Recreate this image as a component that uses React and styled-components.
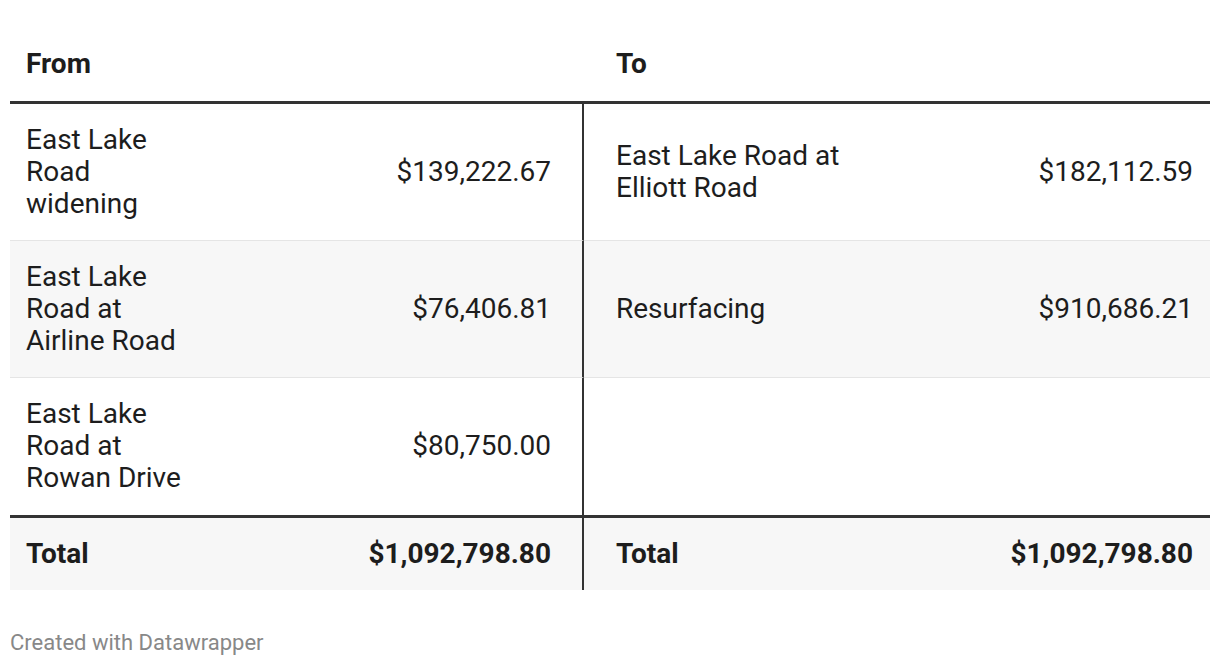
import React from "react";
import styled, { createGlobalStyle } from "styled-components";

const Global = createGlobalStyle`
  html, body { margin: 0; padding: 0; background: #fff; }
  body { font-family: Roboto, "Liberation Sans", sans-serif; color: #1d1d1d; }
`;

const Page = styled.div`
  padding: 28px 10px 0 10px;
`;

const Table = styled.div`
  display: grid;
  grid-template-columns: 190px 384px 280px 1fr;
`;

const Cell = styled.div`
  display: flex;
  align-items: center;
  justify-content: ${(p) => (p.$num ? "flex-end" : "flex-start")};
  font-size: 28px;
  line-height: 32px;
  font-weight: ${(p) => (p.$bold ? 700 : 400)};
  padding: 20px ${(p) => p.$pr}px ${(p) => (p.$extra ? 21 : 20)}px ${(p) => p.$pl}px;
  background: ${(p) => (p.$shade ? "#f7f7f7" : "#fff")};
  border-right: ${(p) => (p.$divider ? "2px solid #333" : "none")};
  border-bottom: ${(p) =>
    p.$thick ? "3px solid #333" : p.$thin ? "1px solid #e5e5e5" : "none"};
  box-sizing: border-box;
`;

const Footer = styled.div`
  margin-top: 40px;
  font-size: 22px;
  line-height: 26px;
  color: #888;
`;

const rows = [
  ["East Lake Road widening", "$139,222.67", "East Lake Road at Elliott Road", "$182,112.59"],
  ["East Lake Road at Airline Road", "$76,406.81", "Resurfacing", "$910,686.21"],
  ["East Lake Road at Rowan Drive", "$80,750.00", "", ""],
];

const pads = [
  { $pl: 16, $pr: 8 },
  { $pl: 8, $pr: 31 },
  { $pl: 32, $pr: 8 },
  { $pl: 8, $pr: 17 },
];

export default function App() {
  return (
    <>
      <Global />
      <Page>
        <Table>
          {["From", "", "To", ""].map((t, i) => (
            <Cell key={"h" + i} $head $bold $thick $extra {...pads[i]}>
              {t}
            </Cell>
          ))}
          {rows.map((r, ri) =>
            r.map((t, ci) => (
              <Cell
                key={ri + "-" + ci}
                {...pads[ci]}
                $num={ci % 2 === 1}
                $shade={ri === 1}
                $divider={ci === 1}
                $thin={ri < 2}
                $thick={ri === 2}
                $extra={ri === 2}
              >
                {t}
              </Cell>
            ))
          )}
          {["Total", "$1,092,798.80", "Total", "$1,092,798.80"].map((t, i) => (
            <Cell key={"t" + i} {...pads[i]} $bold $shade $num={i % 2 === 1} $divider={i === 1}>
              {t}
            </Cell>
          ))}
        </Table>
        <Footer>Created with Datawrapper</Footer>
      </Page>
    </>
  );
}
